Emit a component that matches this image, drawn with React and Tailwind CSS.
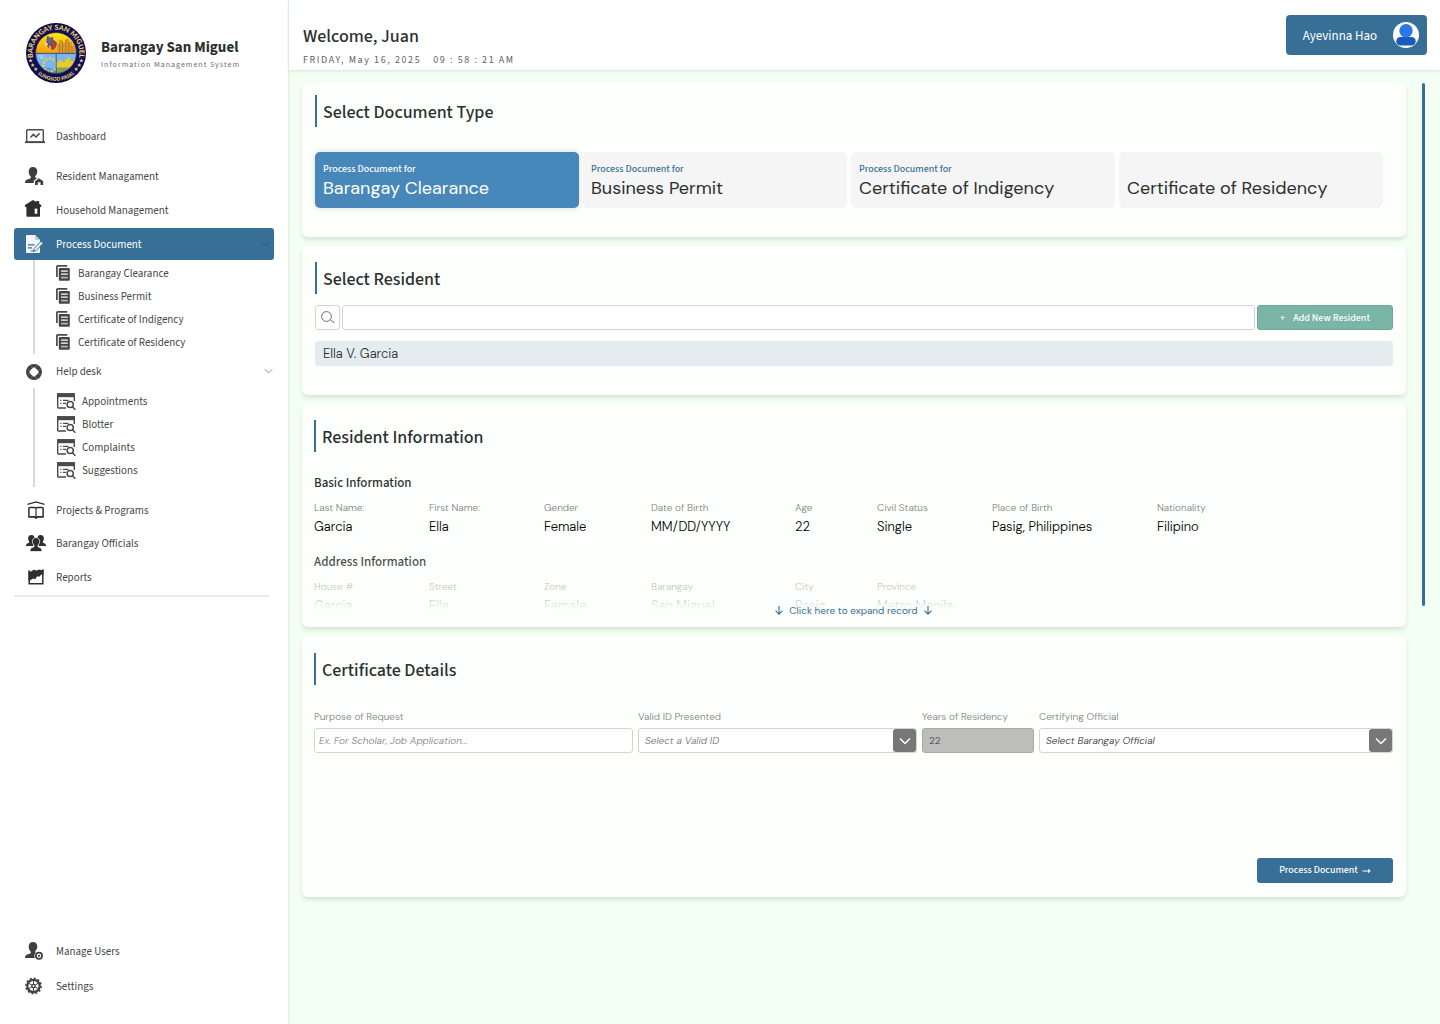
const body = "font-['DM_Sans','Inter',sans-serif]";
const ink = "text-[#2b302f]";

/* ---------- icons ---------- */

function Seal() {
  return (
    <svg viewBox="0 0 60 60" className="size-[60px] shrink-0" role="img" aria-label="Barangay San Miguel seal">
      <defs>
        <path id="sealTop" d="M10.800 43.500A23.400 23.400 0 1 1 49.200 43.500" />
        <path id="sealBottom" d="M8 47A27.800 27.800 0 0 0 52 47" />
        <linearGradient id="sealSky" x1="0" y1="0" x2="0" y2="1">
          <stop offset="0" stopColor="#fdec10" />
          <stop offset="1" stopColor="#f59a0c" />
        </linearGradient>
        <clipPath id="sealClip">
          <circle cx="30" cy="30" r="20.5" />
        </clipPath>
      </defs>
      <circle cx="30" cy="30" r="30" fill="#0d0a3c" />
      <circle cx="30" cy="30" r="25" fill="none" stroke="#120e58" strokeWidth="7.500" />
      <g clipPath="url(#sealClip)">
        <rect x="9" y="9" width="42" height="21.5" fill="url(#sealSky)" />
        <rect x="9" y="30.5" width="42" height="21" fill="#7db4ec" />
        <path d="M31 30V21h2v-4h3v3h3v-4h4v3h3v4h4v7z" fill="#d89b2c" />
        <path d="M33.500 21v9M36.500 18v12M40 17v13M43 19v11M46 23v7" stroke="#a86d1c" strokeWidth=".8" />
        <path d="M21 13l3 2 3-1 1 3 3 3-1 4-3 3-4-2-3-3z" fill="#7d4a3d" />
        <path d="M22 13l4 3-1 5-4-2z" fill="#56688f" />
        <path d="M18.500 18l3.500 3-1.500 3z" fill="#ecdfc0" />
        <path d="M26 19l3 1 1 4-3 2z" fill="#c5412b" />
        <path d="M27 15l2 1-1 2zM23 22l2 2-1 3z" fill="#dfe3ea" />
        <path d="M30 45V39h3v-2h3v2h3v-3h3v-2h2v4h4v-2h4v9z" fill="#e9c92b" />
        <path d="M30 44.500h22v7H30z" fill="#7fa35b" />
        <path d="M9 46c7-3 14-2 21 1v5H9z" fill="#5b95d8" />
        <circle cx="24" cy="42" r="6.600" fill="none" stroke="#d9d256" strokeWidth="2.400" strokeDasharray="2.400 1.300" />
        <path d="M12 33h6M14 35h4" stroke="#c6e0f7" strokeWidth="1" />
        <path d="M30.200 30v22M9 30.400h42" stroke="#30548e" strokeWidth=".9" />
      </g>
      <circle cx="30" cy="30" r="20.5" fill="none" stroke="#2b2a5e" strokeWidth=".8" />
      <text fill="#ecd06a" fontSize="7" fontWeight="900" fontFamily="Lato, sans-serif">
        <textPath href="#sealTop" startOffset="50%" textAnchor="middle">BARANGAY SAN MIGUEL</textPath>
      </text>
      <text fill="#ecd06a" fontSize="5" fontWeight="900" fontFamily="Lato, sans-serif">
        <textPath href="#sealBottom" startOffset="50%" textAnchor="middle">LUNGSOD PASIG</textPath>
      </text>
      <g fill="#efd97e">
        {[[4.600, 37.500], [6.700, 42], [9.800, 46], [55.400, 37.500], [53.300, 42], [50.200, 46]].map(([x, y]) => (
          <path key={`${x}-${y}`} transform={`translate(${x} ${y})`} d="M0-2.1.6-.6 2.1-.6.9.4 1.3 1.9 0 1-1.3 1.9-.9.4-2.1-.6-.6-.6z" />
        ))}
      </g>
    </svg>
  );
}

function DashboardIcon() {
  return (
    <svg viewBox="0 0 20 15" className="h-[15px] w-5" fill="none" stroke="#4a4a4a">
      <path d="M1.7 12V1.6Q1.7.8 2.5.8h15q.8 0 .8.8V12" strokeWidth="1.400" />
      <path d="M0 13.100h20" strokeWidth="2" />
      <path d="M5.400 8.600l3-3.200 2.600 2.600 3.600-3.600" strokeWidth="1.500" />
    </svg>
  );
}

const bust = "M8 0c2.700 0 4.300 1.900 4.300 4.500 0 1.700-.7 3.300-1.800 4.200-.4.400-.5 1.300 0 1.700.500.500 1.700.8 1.500 1.700-.3 1.300-1.800 1-1.900 3.900H0c0-3 1.800-3.300 3.900-4 1.300-.4 2-.8 2-1.700 0-.8-.7-1.200-1.300-2.100C4 7.200 3.700 5.800 3.700 4.500 3.700 1.900 5.300 0 8 0z";

function ResidentIcon() {
  return (
    <svg viewBox="0 -1 20 20" className="size-5" fill="#3d3f3e">
      <path d={bust} />
      <path d="M13.800 10L8.800 13.800V18h9.200v-4.200z" fill="#fff" />
      <path d="M14 11.200l4.200 3V18h-2.700v-2.800h-2.700V18H10v-3.800z" />
    </svg>
  );
}

function HouseIcon() {
  return (
    <svg viewBox="0 1 20 20" className="size-5" fill="#2b302f">
      <path d="M8 1l3.300 2V2h2.900v2.800L16.200 6v2H15v9q0 .8-.8.8H2.200q-.8 0-.8-.8V8H0V6z" />
      <path d="M9.700 9.600h2.600v5.200H9.700z" fill="#fff" />
    </svg>
  );
}

function ProcessIcon() {
  return (
    <svg viewBox="-1 -1 20 20" className="size-5">
      <path d="M1 0h8l5 5v12.200q0 .8-.8.8H1q-1 0-1-1V1q0-1 1-1z" fill="#f3f6f8" />
      <path d="M9 0v4.200q0 .8.8.8H14z" fill="#b9cddb" />
      <path d="M2 9.800h6.500M2 12.800h4" stroke="#376f96" strokeWidth="1.300" />
      <path d="M15.200 6.200L8.300 13.400l-.9 3 2.900-1 6.800-7.200z" fill="#f3f6f8" stroke="#376f96" strokeWidth="1" />
      <path d="M4.600 16.300c2-1.300 2 .4 3.600-.1" stroke="#376f96" strokeWidth="1" fill="none" />
    </svg>
  );
}

function CopiesIcon() {
  return (
    <svg viewBox="0 0 14 16" className="mb-px h-4 w-3.5 shrink-0">
      <path d="M.9 12V1.700Q.9.900 1.800.900H11.300" fill="none" stroke="#4a4a4a" strokeWidth="1.700" />
      <rect x="2.800" y="3" width="11" height="12.800" rx="1" fill="#454545" />
      <path d="M5 6.200h6.800M5 9.100h6.800" stroke="#fff" strokeWidth="1.300" />
      <path d="M5 12.600h6.800" stroke="#b5b5b5" strokeWidth="1.700" />
    </svg>
  );
}

function HelpIcon() {
  return (
    <svg viewBox="-1 -3 20 20" className="size-5">
      <circle cx="8" cy="8" r="5.900" fill="none" stroke="#3f4241" strokeWidth="4.200" />
      <path d="M8 3l5 5-5 5-5-5z" fill="#fff" />
      <path d="M1.600 5.200L3.800 6.300M5.200 1.600L6.300 3.800M14.400 5.200L12.200 6.300M10.800 1.600L9.700 3.800M1.600 10.800L3.800 9.700M5.200 14.400L6.300 12.200M14.400 10.800L12.200 9.700M10.800 14.400L9.700 12.200" stroke="#fff" strokeWidth=".25" />
    </svg>
  );
}

function RecordSearchIcon() {
  return (
    <svg viewBox="0 0 19 17" className="h-[17px] w-[19px] shrink-0" fill="none" stroke="#4a4a4a">
      <path d="M9 15H1.500Q.700 15 .700 14.200V1h16.600v7" strokeWidth="1.400" />
      <path d="M0 2.200h18" strokeWidth="4" />
      <path d="M3.300 7.400h1.200M3.300 10.400h1.200M6 7.400h5.500M6 10.400h3" strokeWidth="1.200" />
      <circle cx="13.200" cy="11.500" r="3.100" strokeWidth="1.500" />
      <path d="M15.400 13.700l3 3" strokeWidth="1.600" />
    </svg>
  );
}

function ProjectsIcon() {
  return (
    <svg viewBox="-2 -1 20 20" className="size-5" fill="none" stroke="#2b302f">
      <path d="M.5 3.400L9 .9l8.500 2.500" strokeWidth="1.300" />
      <path d="M1.900 15.700V7.400q0-1 1.100-1h4.400Q9 6.400 9 7.400q0-1 1.600-1H15q1.100 0 1.100 1v8.300" strokeWidth="1.500" />
      <path d="M9 7v9.500" strokeWidth="1.200" />
      <path d="M1.200 15.900h6.300l1.500 1 1.500-1h6.300" strokeWidth="1.900" />
    </svg>
  );
}

function OfficialsIcon() {
  return (
    <svg viewBox="-1 -2 22 20" className="h-5 w-[22px]" fill="#2b302f">
      <path d="M5.500 0c2 0 3 1.200 3 3.200L7.300 5.500l-.6 2 .8 3.500H0c0-2 .8-2.400 2.200-2.900 1-.4 1.300-.9.8-1.700-.7-1-.9-2-.9-3.100C2.100 1.200 3.500 0 5.500 0z" />
      <path d="M14.500 0c-2 0-3 1.200-3 3.200l1.200 2.300.6 2-.8 3.500H20c0-2-.8-2.400-2.200-2.900-1-.4-1.300-.9-.8-1.700.7-1 .9-2 .9-3.100C17.900 1.200 16.500 0 14.500 0z" />
      <path d="M10 2.600c2.300 0 3.600 1.500 3.600 3.800 0 1.500-.6 2.800-1.500 3.700-.5.600-.4 1.600.3 1.900 1.700.7 3.600.8 3.600 4.500H4c0-3.700 1.900-3.800 3.600-4.500.7-.3.800-1.300.3-1.900C7 9.200 6.400 7.900 6.400 6.400c0-2.300 1.300-3.800 3.600-3.800z" stroke="#fff" strokeWidth=".7" />
    </svg>
  );
}

function ReportsIcon() {
  return (
    <svg viewBox="-3 -2 20 20" className="size-5">
      <path d="M1.200 1.500v13.300h13.600V1" fill="none" stroke="#2b302f" strokeWidth="1.500" />
      <path d="M.5 1.500l2.200 1.200L5.500.8l3 .8 3-1.100 1.500.8 2.500-1.300v6l-2.200-.4-2 2.200-2-.6-2.200 3-1.700-.8L.5 12z" fill="#2b302f" />
    </svg>
  );
}

function ManageUsersIcon() {
  return (
    <svg viewBox="0 -1 20 20" className="size-5" fill="#3d3f3e">
      <path d={bust} />
      <circle cx="14" cy="13.800" r="4.600" fill="#fff" />
      <circle cx="14" cy="13.800" r="3.100" fill="none" stroke="#3d3f3e" strokeWidth="1.700" />
      <circle cx="14" cy="13.800" r="1.100" />
    </svg>
  );
}

function SettingsIcon() {
  return (
    <svg viewBox="0 -1.500 20 20" className="size-5" fill="none" stroke="#3f4241">
      <circle cx="8.500" cy="8.500" r="7.600" strokeWidth="1.600" strokeDasharray="1.990 1.990" />
      <circle cx="8.500" cy="8.500" r="6.200" strokeWidth="2.200" />
      <circle cx="8.500" cy="8.500" r="1.700" strokeWidth="1.300" />
      <path d="M8.500 2.500v4.200M8.500 10.300v4.200M3.300 5.500l3.600 2.100M10.100 9.400l3.600 2.100M3.300 11.500l3.600-2.100M10.100 7.600l3.600-2.100" strokeWidth="1" />
    </svg>
  );
}

function Chevron({ className }) {
  return (
    <svg viewBox="0 0 12 8" className={className} fill="none" stroke="currentColor">
      <path d="M1 1.500l5 5 5-5" />
    </svg>
  );
}

function DownArrow() {
  return (
    <svg viewBox="0 0 8 9" className="h-[9px] w-2" fill="none" stroke="currentColor" strokeWidth="1.100">
      <path d="M4 0v8M.6 4.700L4 8.100l3.400-3.400" />
    </svg>
  );
}

function Avatar() {
  return (
    <svg viewBox="0 0 26 26" className="size-[26px]">
      <circle cx="13" cy="13" r="13" fill="#fff" />
      <rect x="3.300" y="15" width="19.400" height="8.600" rx="4.200" fill="#185abd" />
      <circle cx="13" cy="8.800" r="6.700" fill="#2b78e4" />
    </svg>
  );
}

/* ---------- sidebar ---------- */

function NavItem({ icon, label, active, chevron, className = "" }) {
  return (
    <a
      href="#"
      aria-current={active ? "page" : undefined}
      className={`flex h-8 items-center gap-2 rounded-[3px] pl-[11px] ${
        active ? "bg-[#376f96] pr-1 text-white" : "pr-px text-[#454847]"
      } ${className}`}
    >
      <span className="flex w-[23px]">{icon}</span>
      <span className="flex-1 pt-0.5">{label}</span>
      {chevron && <Chevron className={`h-1.5 w-[9px] ${active ? "text-[#2b4f6a]" : "text-[#6b6b6b]"}`} />}
    </a>
  );
}

function SubNav({ items, icon, className }) {
  return (
    <ul className={`ml-[19px] border-l-2 border-[#d9d9d9] pt-0.5 ${className}`}>
      {items.map((label) => (
        <li key={label}>
          <a href="#" className="flex h-[23px] items-center text-[#454847]">
            {icon}
            <span className="pt-0.5">{label}</span>
          </a>
        </li>
      ))}
    </ul>
  );
}

function Sidebar() {
  return (
    <aside className="flex w-72 shrink-0 flex-col bg-white px-3.5 pb-[22px] pt-[23px] text-[11px] shadow-[1px_0_2px_#dcebdc]">
      <div className="flex items-center gap-[15px] pl-3">
        <Seal />
        <div className="pt-[3px]">
          <p className={`text-[15px] font-bold leading-5 ${ink}`}>Barangay San Miguel</p>
          <p className="text-[8px] leading-[14px] tracking-[0.12em] text-[#6d6f6e]">Information Management System</p>
        </div>
      </div>
      <nav className="mt-[37px] flex flex-col" aria-label="Main">
        <NavItem icon={<DashboardIcon />} label="Dashboard" />
        <NavItem className="mt-2" icon={<ResidentIcon />} label="Resident Managament" />
        <NavItem className="mt-0.5" icon={<HouseIcon />} label="Household Management" />
        <NavItem className="mt-0.5" icon={<ProcessIcon />} label="Process Document" active chevron />
        <SubNav
          className="pl-[21px] [&_a]:gap-2"
          icon={<CopiesIcon />}
          items={["Barangay Clearance", "Business Permit", "Certificate of Indigency", "Certificate of Residency"]}
        />
        <NavItem className="mt-px" icon={<HelpIcon />} label="Help desk" chevron />
        <SubNav
          className="mt-px pb-[5px] pl-[22px] [&_a]:gap-1.5"
          icon={<RecordSearchIcon />}
          items={["Appointments", "Blotter", "Complaints", "Suggestions"]}
        />
        <NavItem className="mt-[7px]" icon={<ProjectsIcon />} label="Projects & Programs" />
        <NavItem className="mt-px" icon={<OfficialsIcon />} label="Barangay Officials" />
        <NavItem className="mt-0.5" icon={<ReportsIcon />} label="Reports" />
        <hr className="mr-[5px] mt-0.5 border-t-2 border-[#ebebeb]" />
      </nav>
      <nav className="mt-auto flex flex-col" aria-label="Administration">
        <NavItem icon={<ManageUsersIcon />} label="Manage Users" />
        <NavItem className="mt-[3px]" icon={<SettingsIcon />} label="Settings" />
      </nav>
    </aside>
  );
}

/* ---------- main ---------- */

function Card({ title, className = "", children }) {
  return (
    <section className={`rounded-md bg-[#fdfffd] pr-[13px] shadow-[0_3px_4px_rgba(0,40,0,0.12)] ${className}`}>
      <h2 className={`flex h-8 items-center border-l-2 border-[#376f96] pl-1.5 pt-[3px] text-lg font-medium ${ink}`}>
        {title}
      </h2>
      {children}
    </section>
  );
}

function DocType({ name, hint = true, selected }) {
  return (
    <button
      type="button"
      aria-pressed={!!selected}
      className={`flex h-14 flex-col justify-end rounded-[5px] px-2 pb-2 text-left ${
        selected ? "bg-[#4887b9] text-white shadow-[0_0_6px_rgba(0,0,0,0.15)]" : "bg-[#f5f5f5] text-[#2b302f]"
      }`}
    >
      {hint && (
        <span className={`text-[10px] font-medium leading-[14px] ${selected ? "text-white" : "text-[#376f96]"}`}>
          Process Document for
        </span>
      )}
      <span className={`text-[18px] leading-6 ${body}`}>{name}</span>
    </button>
  );
}

function Facts({ items }) {
  return (
    <dl className={`grid grid-cols-[115fr_115fr_107fr_144fr_82fr_115fr_165fr_236fr] ${body} font-light`}>
      {items.map(([k, v]) => (
        <div key={k}>
          <dt className="text-[10px] leading-4 text-[#7d7f7e]">{k}</dt>
          <dd className="mt-px text-[13px] leading-5 text-black">{v}</dd>
        </div>
      ))}
    </dl>
  );
}

const fieldBox = "h-[25px] w-full rounded-[3px] border border-[#d4d4d4] bg-white";
const labelText = "mb-[3px] block text-[10px] leading-4 text-[#7d7f7e]";

function SelectField({ id, label, placeholder, tone }) {
  return (
    <div>
      <label htmlFor={id} className={labelText}>{label}</label>
      <div className={`${fieldBox} relative`}>
        <select id={id} className={`block size-full appearance-none bg-transparent px-1.5 text-[10px] italic ${tone}`}>
          <option>{placeholder}</option>
        </select>
        <span className="pointer-events-none absolute inset-y-0 right-0 flex w-[23px] items-center justify-center rounded-[3px] bg-[#777] text-white">
          <Chevron className="h-2 w-3 stroke-[1.5]" />
        </span>
      </div>
    </div>
  );
}

export default function App() {
  return (
    <div className="flex min-h-screen bg-[#f4fff4] font-['Source_Sans_3','Noto_Sans_CJK_SC',sans-serif]">
      <Sidebar />
      <div className="ml-px flex min-w-0 flex-1 flex-col">
        <header className="flex h-[70px] items-center justify-between bg-white pl-3.5 pr-[13px] shadow-[0_1px_3px_#d5e3d5]">
          <div className="pt-5">
            <h1 className={`text-lg font-medium leading-6 ${ink}`}>Welcome, Juan</h1>
            <p className="mt-1.5 flex gap-3 text-[10px] leading-[10px] tracking-[0.16em] text-[#5c5f5e]">
              <span>FRIDAY, May 16, 2025</span>
              <span>09 : 58 : 21 AM</span>
            </p>
          </div>
          <button type="button" className="flex h-10 items-center gap-4 rounded bg-[#376f96] pl-[17px] pr-2 text-[13px] text-white">
            <span className="pt-[3px]">Ayevinna Hao</span>
            <Avatar />
          </button>
        </header>

        <div className="flex gap-4 py-[13px] pl-[13px] pr-[15px]">
          <main className="flex min-w-0 flex-1 flex-col">
            <Card title="Select Document Type" className="pb-[29px] pl-[13px] pt-3">
              <div className="mt-[25px] grid grid-cols-4 gap-1 pr-2.5">
                <DocType name="Barangay Clearance" selected />
                <DocType name="Business Permit" />
                <DocType name="Certificate of Indigency" />
                <DocType name="Certificate of Residency" hint={false} />
              </div>
            </Card>

            <Card title="Select Resident" className="mt-[9px] pb-[29px] pl-[13px] pt-4">
              <div className="mt-[11px] flex gap-0.5">
                <button
                  type="button"
                  aria-label="Search"
                  className="flex size-[25px] items-center justify-center rounded-[3px] border border-[#d4d4d4] bg-white"
                >
                  <svg viewBox="0 0 14 13" className="h-[13px] w-3.5" fill="none" stroke="#6b6b6b" strokeWidth="1">
                    <circle cx="5.500" cy="5.500" r="4.900" />
                    <path d="M9.200 8.700l4.300 3.300" />
                  </svg>
                </button>
                <input
                  type="text"
                  aria-label="Search resident"
                  className="h-[25px] min-w-0 flex-1 rounded-[3px] border border-[#d4d4d4] bg-white px-2 text-xs"
                />
                <button
                  type="button"
                  className="flex h-[25px] w-[136px] items-center justify-center gap-2 rounded-[3px] border border-[#6fa696] bg-[#7ab5a6] pt-0.5 text-[10px] font-medium text-white"
                >
                  <span>+</span>
                  Add New Resident
                </button>
              </div>
              <button
                type="button"
                className={`mt-[11px] block h-[25px] w-full rounded-[3px] bg-[#e4ecef] px-2 text-left text-[13px] font-light ${ink} ${body}`}
              >
                Ella V. Garcia
              </button>
            </Card>

            <Card title="Resident Information" className="mt-[9px] pb-[9px] pl-3 pt-4">
              <h3 className={`mt-[22px] text-[13px] font-medium leading-[18px] ${ink}`}>Basic Information</h3>
              <div className="mt-2">
                <Facts
                  items={[
                    ["Last Name:", "Garcia"],
                    ["First Name:", "Ella"],
                    ["Gender", "Female"],
                    ["Date of Birth", "MM/DD/YYYY"],
                    ["Age", "22"],
                    ["Civil Status", "Single"],
                    ["Place of Birth", "Pasig, Philippines"],
                    ["Nationality", "Filipino"],
                  ]}
                />
              </div>
              <div className="relative mt-4 h-[57px] overflow-hidden">
                <h3 className={`text-[13px] font-medium leading-[18px] ${ink}`}>Address Information</h3>
                <div className="mt-2">
                  <Facts
                    items={[
                      ["House #", "Garcia"],
                      ["Street", "Ella"],
                      ["Zone", "Female"],
                      ["Barangay", "San Miguel"],
                      ["City", "Pasig"],
                      ["Province", "Metro Manila"],
                    ]}
                  />
                </div>
                <div className="absolute inset-0 bg-linear-to-b from-[#fdfffd]/0 via-[#fdfffd]/55 via-60% to-[#fdfffd]" />
              </div>
              <div className="relative flex justify-center">
                <button type="button" className={`-mt-2 flex h-4 items-center gap-1.5 text-[10px] text-[#376f96] ${body}`}>
                  <DownArrow />
                  Click here to expand record
                  <DownArrow />
                </button>
              </div>
            </Card>

            <Card title="Certificate Details" className="mt-2.5 pb-3.5 pl-3 pt-4">
              <div className={`mt-6 grid grid-cols-[319fr_279fr_112fr_354fr] gap-[5px] font-light ${body}`}>
                <div>
                  <label htmlFor="purpose" className={labelText}>Purpose of Request</label>
                  <input
                    id="purpose"
                    type="text"
                    placeholder="Ex. For Scholar, Job Application..."
                    className={`${fieldBox} block px-1 text-[10px] italic placeholder:text-[#7d7f7e]`}
                  />
                </div>
                <SelectField id="valid-id" label="Valid ID Presented" placeholder="Select a Valid ID" tone="text-[#6d6f6e]" />
                <div>
                  <label htmlFor="years" className={labelText}>Years of Residency</label>
                  <input
                    id="years"
                    type="text"
                    readOnly
                    value="22"
                    className="block h-[25px] w-full rounded-[3px] border border-[#a9a9a9] bg-[#bdbdbb] px-1.5 text-[10px] text-[#3f4241]"
                  />
                </div>
                <SelectField id="official" label="Certifying Official" placeholder="Select Barangay Official" tone="text-[#2b302f]" />
              </div>
              <div className="mt-[105px] flex justify-end">
                <button
                  type="button"
                  className="flex h-[25px] w-[136px] items-center justify-center gap-1 rounded-[3px] bg-[#376f96] text-[10px] font-medium text-white"
                >
                  Process Document
                  <svg viewBox="0 0 9 6" className="h-1.5 w-[9px]" fill="none" stroke="currentColor" strokeWidth="1">
                    <path d="M.5 3h7" />
                    <path d="M6 .8L8.700 3 6 5.200z" fill="currentColor" stroke="none" />
                  </svg>
                </button>
              </div>
            </Card>
          </main>
          <div className="h-[523px] w-[3px] rounded-sm bg-[#376f96]" />
        </div>
      </div>
    </div>
  );
}
